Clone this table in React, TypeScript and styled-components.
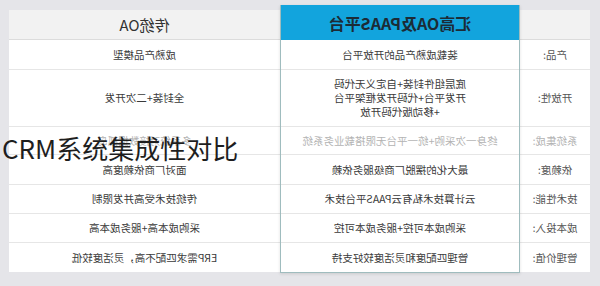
import styled, { createGlobalStyle } from "styled-components";

const GlobalStyle = createGlobalStyle`
  body {
    margin: 0;
    background: #e5e5e9;
    font-family: "Noto Sans CJK SC", "Noto Sans", sans-serif;
  }
`;

const Stage = styled.div`
  position: relative;
  width: 600px;
  height: 286px;
  overflow: hidden;
  background: #e5e5e9;
`;

// the source picture is a flipped photo of the table, so the table is drawn normally and mirrored
const Mirror = styled.div`
  display: flex;
  align-items: flex-start;
  padding: 5px 0 0 10px;
  transform: scaleX(-1);
`;

const SideColumn = styled.div<{ $width: number }>`
  width: ${(p) => p.$width}px;
  margin-top: 5px;
  display: flex;
  flex-direction: column;
  background: #ffffff;
`;

const MainColumn = styled.div`
  width: 240px;
  box-sizing: border-box;
  display: flex;
  flex-direction: column;
  background: #ffffff;
  border: 1px solid #9fbcbe;
  border-top: none;
  box-shadow: 0 1px 3px rgba(0, 0, 0, 0.12);
  position: relative;
  z-index: 1;
`;

const SideHeader = styled.div`
  height: 30px;
  box-sizing: border-box;
  display: flex;
  align-items: center;
  justify-content: center;
  background: #f2f2f2;
  border-bottom: 1px solid #dcdcdc;
  font-size: 15px;
  color: #333333;
`;

const MainHeader = styled.div`
  height: 35px;
  box-sizing: border-box;
  display: flex;
  align-items: center;
  justify-content: center;
  background: #12a4dd;
  font-size: 16px;
  font-weight: bold;
  color: #1c2b36;
`;

const Cell = styled.div<{ $h: number; $faded?: boolean; $label?: boolean }>`
  height: ${(p) => p.$h}px;
  box-sizing: border-box;
  display: flex;
  flex-direction: column;
  align-items: center;
  justify-content: center;
  border-bottom: 1px solid #e6e6e6;
  font-size: 10.5px;
  line-height: 14px;
  text-align: center;
  color: ${(p) => (p.$faded ? "#b3b3b3" : p.$label ? "#555555" : "#3a3a3a")};
  &:last-child {
    border-bottom: none;
  }
`;

const Title = styled.div`
  position: absolute;
  left: 2px;
  top: 134px;
  font-size: 26px;
  line-height: 28px;
  color: #1e1e1e;
  white-space: nowrap;
`;

type Row = {
  label: string;
  ours: string[];
  old: string;
  h: number;
  faded?: boolean;
};

const rows: Row[] = [
  { label: "产品:", ours: ["装载成熟产品的开放平台"], old: "成熟产品模型", h: 30 },
  {
    label: "开放性:",
    ours: ["底层组件封装+自定义无代码", "开发平台+代码开发框架平台", "+移动版代码开放"],
    old: "全封装+二次开发",
    h: 57,
  },
  {
    label: "系统集成:",
    ours: ["终身一次采购+统一平台无限搭载业务系统"],
    old: "多系统对接数据孤岛",
    h: 28,
    faded: true,
  },
  { label: "依赖度:", ours: ["最大化的摆脱厂商级服务依赖"], old: "面对厂商依赖度高", h: 30 },
  { label: "技术性能:", ours: ["云计算技术私有云PAAS平台技术"], old: "传统技术受高并发限制", h: 29 },
  { label: "成本投入:", ours: ["采购成本可控+服务成本可控"], old: "采购成本高+服务成本高", h: 29 },
  { label: "管理价值:", ours: ["管理匹配度和灵活度较好支持"], old: "ERP需求匹配不高，灵活度较低", h: 29 },
];

const App: React.FC = () => {
  return (
    <Stage>
      <GlobalStyle />
      <Mirror>
        <SideColumn $width={70}>
          <SideHeader />
          {rows.map((r) => (
            <Cell key={r.label} $h={r.h} $label $faded={r.faded}>
              {r.label}
            </Cell>
          ))}
        </SideColumn>
        <MainColumn>
          <MainHeader>汇高OA及PAAS平台</MainHeader>
          {rows.map((r) => (
            <Cell key={r.label} $h={r.h} $faded={r.faded}>
              {r.ours.map((line) => (
                <div key={line}>{line}</div>
              ))}
            </Cell>
          ))}
        </MainColumn>
        <SideColumn $width={271}>
          <SideHeader>传统OA</SideHeader>
          {rows.map((r) => (
            <Cell key={r.label} $h={r.h} $faded={r.faded}>
              {r.old}
            </Cell>
          ))}
        </SideColumn>
      </Mirror>
      <Title>CRM系统集成性对比</Title>
    </Stage>
  );
};

export default App;
